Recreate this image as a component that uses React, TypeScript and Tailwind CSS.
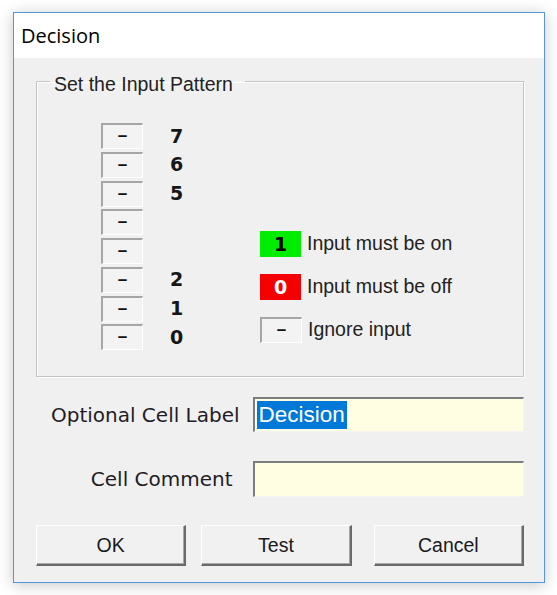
import React from "react";

const sans = "font-['Liberation_Sans',Arial,sans-serif]";
const verdana = "font-['DejaVu_Sans',Verdana,sans-serif]";

const bits: (string | null)[] = ["7", "6", "5", null, null, "2", "1", "0"];

function DashBox() {
  return (
    <div className="flex h-[26px] w-[42px] items-center justify-center border-t-2 border-l-2 border-b border-r border-t-[#a6a6a6] border-l-[#a6a6a6] border-b-white border-r-white bg-[#f3f3f3] pb-[2px]">
      <span className={`${sans} text-[17px] font-bold leading-none text-[#111]`}>–</span>
    </div>
  );
}

function LegendRow({ box, label }: { box: React.ReactNode; label: string }) {
  return (
    <div className="flex items-center gap-[6px]">
      {box}
      <span className={`${sans} text-[19.5px] leading-none text-[#222]`}>{label}</span>
    </div>
  );
}

function WinButton({ label, className = "" }: { label: string; className?: string }) {
  return (
    <button
      className={`${sans} flex h-[41px] w-[151px] items-center justify-center border-t border-l border-t-white border-l-white border-r-2 border-b-2 border-r-[#6a6a6a] border-b-[#6a6a6a] bg-[#f1f1f1] text-[19.5px] text-[#1a1a1a] shadow-[inset_-1px_-1px_0_#a8a8a8] ${className}`}
    >
      {label}
    </button>
  );
}

export default function App() {
  return (
    <div className="h-[595px] w-[557px] bg-white pl-[13px] pt-[12px]">
      <div className="flex h-[571px] w-[532px] flex-col border border-[#5596d8] shadow-[0_2px_14px_rgba(0,0,0,0.22)]">
        {/* title bar */}
        <div className="flex h-[45px] items-center bg-white px-[7px] pt-[1px]">
          <span className="font-['Open_Sans',sans-serif] text-[20px] text-black">Decision</span>
        </div>

        {/* body */}
        <div className="flex flex-1 flex-col bg-[#f0f0f0] pl-[22px] pr-[20px] pt-[9px]">
          <fieldset className="border border-[#c4c4c4] pb-[26px] pt-[28px] shadow-[1px_1px_0_#ffffff,inset_1px_1px_0_#ffffff]">
            <legend className={`${sans} ml-[13px] pl-[4px] pr-[12px] pt-[6px] text-[19.5px] leading-[22px] text-[#222]`}>
              Set the Input Pattern
            </legend>
            <div className="flex pl-[64px]">
              <div className="flex flex-col gap-[2.75px]">
                {bits.map((b, i) => (
                  <div key={i} className="flex items-center">
                    <DashBox />
                    <span className={`${verdana} ml-[27px] w-[20px] text-[19px] font-bold leading-none text-[#161616]`}>
                      {b ?? ""}
                    </span>
                  </div>
                ))}
              </div>
              <div className="ml-[70px] mt-[108px] flex flex-col gap-[17px]">
                <LegendRow
                  box={
                    <div className="flex h-[26px] w-[41px] items-center justify-center bg-[#00ec00]">
                      <span className={`${verdana} text-[19px] font-bold leading-none text-black`}>1</span>
                    </div>
                  }
                  label="Input must be on"
                />
                <LegendRow
                  box={
                    <div className="flex h-[26px] w-[41px] items-center justify-center bg-[#f50000]">
                      <span className={`${verdana} text-[19px] font-bold leading-none text-white`}>0</span>
                    </div>
                  }
                  label="Input must be off"
                />
                <LegendRow box={<DashBox />} label="Ignore input" />
              </div>
            </div>
          </fieldset>

          {/* label rows */}
          <div className="mt-[20px] flex flex-col gap-[29px]">
            <div className="flex items-center">
              <span className={`${verdana} w-[204px] text-right text-[20px] leading-none text-[#241c24]`}>
                Optional Cell Label
              </span>
              <div className="ml-[13px] flex h-[35px] w-[272px] items-center border-t-2 border-l-2 border-b border-r border-t-[#7d7d7d] border-l-[#7d7d7d] border-b-[#f4f4f4] border-r-[#f4f4f4] bg-[#fffde2] pl-[2px]">
                <span className={`${sans} inline-block h-[28px] bg-[#0078d7] px-[2px] text-[22.5px] leading-[28px] text-white`}>
                  Decision
                </span>
              </div>
            </div>
            <div className="flex items-center">
              <span className={`${verdana} w-[204px] pr-[7px] text-right text-[20px] leading-none text-[#241c24]`}>
                Cell Comment
              </span>
              <div className="ml-[13px] h-[36px] w-[272px] border-t-2 border-l-2 border-b border-r border-t-[#7d7d7d] border-l-[#7d7d7d] border-b-[#f4f4f4] border-r-[#f4f4f4] bg-[#fffde2]" />
            </div>
          </div>

          {/* buttons */}
          <div className="mt-[28px] flex">
            <WinButton label="OK" />
            <WinButton label="Test" className="ml-[15px]" />
            <WinButton label="Cancel" className="ml-[22px]" />
          </div>
        </div>
      </div>
    </div>
  );
}
